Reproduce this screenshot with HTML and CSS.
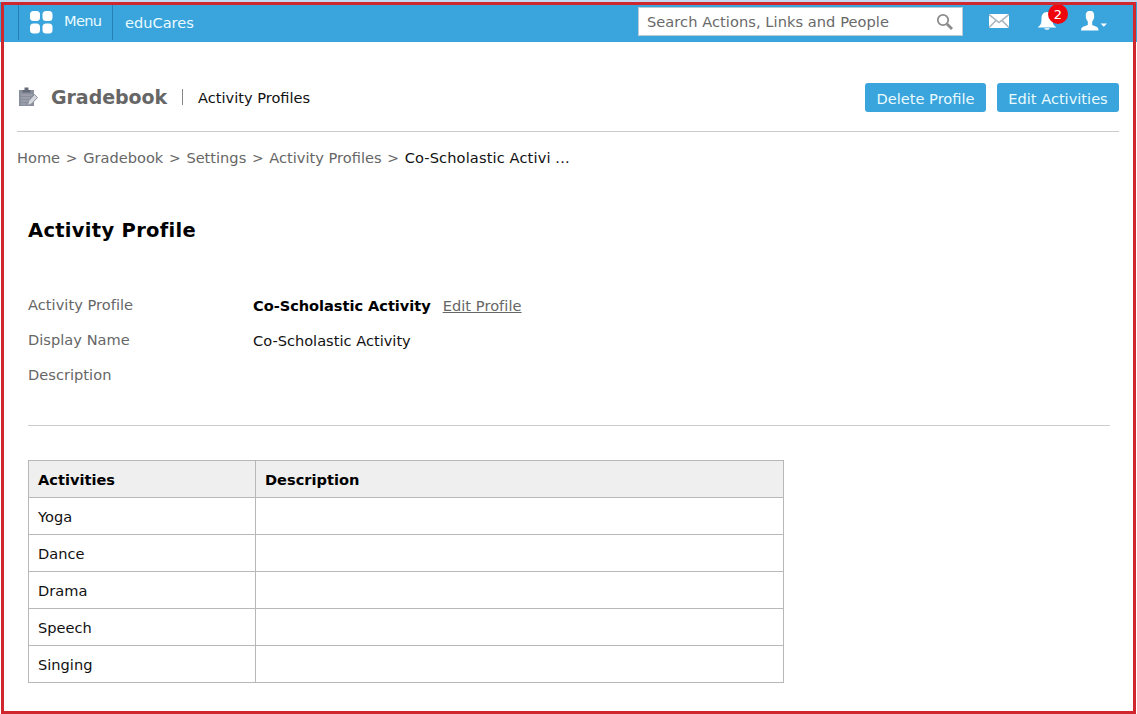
FILE: index.html
```html
<!DOCTYPE html>
<html lang="en">
<head>
<meta charset="utf-8">
<title>Gradebook - Activity Profiles</title>
<link rel="stylesheet" href="styles.css">
</head>
<body>
<header class="topbar">
  <a class="menu">
    <svg class="menu-icon" width="24" height="24" viewBox="0 0 24 24" fill="#fff"><rect x="1" y="1" width="10" height="10" rx="3.500"/><rect x="13.500" y="1" width="10" height="10" rx="3.500"/><rect x="1" y="13.500" width="10" height="10" rx="3.500"/><rect x="13.500" y="13.500" width="10" height="10" rx="3.500"/></svg>
    <span class="menu-label">Menu</span>
  </a>
  <span class="brand">eduCares</span>
  <div class="search">
    <span class="search-text">Search Actions, Links and People</span>
    <svg width="18" height="18" viewBox="0 0 18 18" fill="none" stroke="#8c8c8c"><circle cx="7" cy="7" r="5.200" stroke-width="1.800"/><path d="M11 11l5 5" stroke-width="2.800"/></svg>
  </div>
  <svg class="mail" width="20" height="14" viewBox="0 0 20 14"><path d="M0 0h20v14H0z" fill="#fff"/><path d="M0 0.500l10 8 10-8M0 13.500l7-7M20 13.500l-7-7" fill="none" stroke="#a6b4bd" stroke-width="1.500"/></svg>
  <div class="alerts">
    <svg width="18" height="18" viewBox="0 0 18 18" fill="#fff"><path d="M9 0C5 0 3.500 3 3.500 6.500C3.500 11 3 13 0 15v.5h18V15c-3-2-3.500-4-3.500-8.500C14.500 3 13 0 9 0zM6 16.300h6q-1 1.500-3 1.500t-3-1.500z"/></svg>
    <span class="badge">2</span>
  </div>
  <svg class="user" width="26" height="20" viewBox="0 0 26 20" fill="#fff"><path d="M9 0C5.500 0 4.800 2 4.800 5c0 3 1 4 2 5.500v3.500L1.500 16Q0 16.500 0 19.500h17.500q0-3-1.500-3.500l-4.800-2v-3.500c1-1.500 2-2.500 2-5.500C13.200 2 12.500 0 9 0zM19.500 12.500h6.500l-3.200 3.300z"/></svg>
</header>
<main class="page">
  <section class="title-row">
    <svg class="book" width="20" height="20" viewBox="0 0 20 20"><path d="M0 3h15v16H0z" fill="#8a8f9c"/><path d="M3.500 3h2V0.500h4V3h2v2.500h-8z" fill="#666b7a"/><path d="M2 8h11M2 11h9M2 14h7M2 17h5" stroke="#a9adb8"/><path d="M8.500 18.500l1-4.500 6-6.500 3 3-6 6.500z" fill="#d5d7de" stroke="#8b8f9b"/></svg>
    <h1 class="title">Gradebook</h1>
    <span class="bar"></span>
    <span class="subtitle">Activity Profiles</span>
    <div class="actions"><a class="button delete">Delete Profile</a><a class="button edit">Edit Activities</a></div>
  </section>
  <nav class="crumbs"><span>Home</span><i>&gt;</i><span>Gradebook</span><i>&gt;</i><span>Settings</span><i>&gt;</i><span>Activity Profiles</span><i>&gt;</i><span class="current">Co-Scholastic Activi ...</span></nav>
  <div class="content">
    <h2 class="heading">Activity Profile</h2>
    <dl class="details">
      <dt>Activity Profile</dt><dd><b class="name">Co-Scholastic Activity</b><a class="edit-link">Edit Profile</a></dd>
      <dt>Display Name</dt><dd>Co-Scholastic Activity</dd>
      <dt>Description</dt><dd></dd>
    </dl>
    <table class="activities">
      <thead><tr><th class="col-name">Activities</th><th>Description</th></tr></thead>
      <tbody>
        <tr><td>Yoga</td><td></td></tr>
        <tr><td>Dance</td><td></td></tr>
        <tr><td>Drama</td><td></td></tr>
        <tr><td>Speech</td><td></td></tr>
        <tr><td>Singing</td><td></td></tr>
      </tbody>
    </table>
  </div>
</main>
<div class="frame"></div>
</body>
</html>
```
FILE: styles.css
```css
* { box-sizing: border-box; }
body { margin: 0; width: 1137px; height: 714px; overflow: hidden; background: #fff; color: #111; font: 14.6px/20px "DejaVu Sans", sans-serif; white-space: nowrap; }
svg { display: block; flex: none; }
.topbar { height: 42px; display: flex; align-items: flex-start; padding-left: 18px; background: #3aa4dc; border-top: 2px solid #c5d8ef; color: #e9fbff; }
.menu { display: flex; width: 95px; height: 38px; border-left: 1px solid #2580b3; border-right: 1px solid #2580b3; padding: 8px 0 0 10px; }
.menu-label { margin: 1px 0 0 11px; letter-spacing: -.7px; }
.brand { margin: 11px 0 0 12px; width: 513px; letter-spacing: 0; }
.search { width: 325px; height: 29px; margin-top: 5px; padding: 0 8px 0 8px; background: #fff; border: 1px solid #b8cbd7; display: flex; align-items: center; justify-content: space-between; color: #696969; }
.search-text { letter-spacing: .06px; }
.mail { margin: 12px 0 0 26px; }
.alerts { position: relative; margin: 10px 0 0 29px; width: 18px; }
.badge { position: absolute; left: 10px; top: -8px; width: 20px; height: 20px; border-radius: 50%; background: #f0050c; color: #fff; font-size: 13px; line-height: 21px; text-align: center; }
.user { margin: 9px 0 0 25px; }
.page { padding: 0 18px 0 17px; }
.title-row { height: 90px; border-bottom: 1px solid #ccc; display: flex; align-items: flex-start; padding-top: 41px; }
.book { margin: 4px 0 0 2px; }
.title { margin: 2px 0 0 12px; width: 131px; font-size: 19px; line-height: 24px; letter-spacing: -.05px; color: #666; }
.bar { width: 1px; height: 16px; margin: 6px 0 0; background: #888; }
.subtitle { margin: 5px 0 0 15px; }
.actions { margin-left: auto; display: flex; gap: 11px; }
.button { height: 29px; border-radius: 3px; background: #3aa4dc; color: #e9fbff; line-height: 31px; text-align: center; }
.delete { width: 121px; }
.edit { width: 122px; }
.crumbs { height: 20px; margin-top: 16px; color: #666; display: flex; }
.crumbs i { font-style: normal; width: 23.1px; text-align: center; font-size: 14px; }
.current { color: #111; letter-spacing: .13px; }
.content { padding: 0 9px 0 11px; }
.heading { margin: 51px 0 0; font-size: 19.5px; line-height: 24px; letter-spacing: .3px; color: #000; }
.details { margin: 52px 0 0; height: 131px; border-bottom: 1px solid #ccc; display: grid; grid-template-columns: 225px 1fr; grid-auto-rows: 35px; }
.details dt { color: #666; letter-spacing: .03px; }
.details dd { margin: 1px 0 0; }
.name { color: #000; letter-spacing: -.04px; }
.edit-link { color: #666; text-decoration: underline; margin-left: 12px; letter-spacing: .05px; }
.activities { margin-top: 34px; width: 756px; border-collapse: collapse; table-layout: fixed; }
.activities th, .activities td { height: 37px; border: 1px solid #b8b8b8; padding: 1px 9px 0; text-align: left; }
.activities th { background: #efefef; color: #000; }
.col-name { width: 227px; }
.frame { position: absolute; left: 1px; top: 2px; width: 1135px; height: 712px; border: 3px solid #d0272f; pointer-events: none; }
```
